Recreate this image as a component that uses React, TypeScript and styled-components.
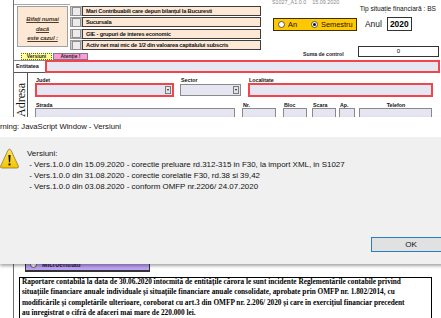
import React from "react";
import styled, { createGlobalStyle } from "styled-components";

const GlobalStyle = createGlobalStyle`
  html, body {
    margin: 0;
    padding: 0;
    background: #fff;
  }
  body {
    font-family: "Liberation Sans", Arial, sans-serif;
  }
`;

const Page = styled.div`
  position: relative;
  width: 441px;
  height: 318px;
  overflow: hidden;
  background: #fff;
`;

const Sheet = styled.div`
  height: 100%;
  padding-left: 13px;
  box-sizing: border-box;
`;

const Frame = styled.div`
  height: 100%;
  border-left: 1px solid #6f6f6f;
  display: flex;
  flex-direction: column;
`;

/* ---------- header ---------- */

const Header = styled.div`
  display: flex;
  height: 60px;
  flex-shrink: 0;
`;

const LeftColumn = styled.div`
  width: 248px;
  display: flex;
  flex-direction: column;
`;

const TopRow = styled.div`
  display: flex;
  height: 53px;
`;

const BifatiWrap = styled.div`
  width: 56px;
  margin-top: 4px;
  padding: 1px 0 0 3px;
  border-top: 1px solid #a6a6a6;
  box-sizing: border-box;
`;

const BifatiBox = styled.div`
  width: 51px;
  height: 41px;
  box-sizing: border-box;
  background: #fce8d5;
  border: 1px solid #a0a0a0;
  padding-top: 8px;
  text-align: center;
  font-size: 6px;
  line-height: 9.5px;
  font-weight: 700;
  font-style: italic;
  text-decoration: underline;
  letter-spacing: -0.15px;
  color: #4a3a2c;
`;

const CheckList = styled.div`
  display: grid;
  grid-auto-rows: 10px;
  row-gap: 1.4px;
  margin-top: 6px;
  width: 191px;
`;

const CheckRow = styled.div`
  display: flex;
`;

const CheckCell = styled.div`
  width: 12px;
  background: #c9c9c9;
  border: 1px solid #9a9a9a;
  border-right: none;
  box-sizing: border-box;
  display: flex;
  align-items: center;
  justify-content: center;
`;

const CheckSquare = styled.div`
  width: 7px;
  height: 7px;
  background: #ececec;
  border: 1px solid #8f8f8f;
`;

const CheckLabel = styled.div`
  flex: 1;
  background: #fce8d5;
  border: 1px solid #3d3d3d;
  padding-left: 3px;
  font-size: 5.7px;
  letter-spacing: -0.2px;
  font-weight: 700;
  line-height: 8px;
  color: #111;
  white-space: nowrap;
  overflow: hidden;
`;

const Tabs = styled.div`
  display: flex;
  gap: 1px;
  margin-left: 7px;
  height: 6.5px;
`;

const Tab = styled.div<{ $tone: "yellow" | "pink" }>`
  width: ${(p) => (p.$tone === "yellow" ? "31px" : "35px")};
  box-sizing: border-box;
  background: ${(p) => (p.$tone === "yellow" ? "#ffff99" : "#ff9ad9")};
  border: 1px ${(p) => (p.$tone === "yellow" ? "dotted #6b6b00" : "solid #7d7d7d")};
  font-size: 5px;
  font-weight: 700;
  line-height: 4.5px;
  text-align: center;
  color: #222;
`;

const RightColumn = styled.div`
  flex: 1;
  display: flex;
  flex-direction: column;
`;

const StampRow = styled.div`
  display: flex;
  align-items: flex-start;
  height: 17px;
`;

const Stamp = styled.div`
  margin-left: 10px;
  margin-top: -1px;
  font-size: 5.4px;
  color: #8a8a8a;
  white-space: pre;
`;

const TipLabel = styled.div`
  margin-left: auto;
  margin-right: 5px;
  margin-top: 5px;
  font-size: 6.6px;
  color: #111;
  white-space: nowrap;
`;

const PeriodRow = styled.div`
  display: flex;
  align-items: center;
  height: 14px;
`;

const PeriodBox = styled.div`
  margin-left: 11px;
  width: 84px;
  height: 13px;
  box-sizing: border-box;
  background: #ffc800;
  border: 1px solid #3a3000;
  display: flex;
  align-items: center;
  padding-left: 4px;
  gap: 3px;
  font-size: 7.4px;
  color: #111;
`;

const Radio = styled.span<{ $on?: boolean }>`
  width: 7px;
  height: 7px;
  border-radius: 50%;
  box-sizing: border-box;
  background: #fff;
  border: 1px solid #555;
  display: inline-flex;
  align-items: center;
  justify-content: center;
  flex-shrink: 0;
  margin-left: ${(p) => (p.$on ? "11px" : "0")};
  &::after {
    content: "";
    width: 3px;
    height: 3px;
    border-radius: 50%;
    background: ${(p) => (p.$on ? "#111" : "transparent")};
  }
`;

const AnulLabel = styled.div`
  margin-left: 8px;
  font-size: 8.4px;
  color: #111;
`;

const YearBox = styled.div`
  margin-left: 5px;
  width: 25px;
  height: 14px;
  box-sizing: border-box;
  border: 1px solid #333;
  font-size: 8.4px;
  font-weight: 700;
  line-height: 12px;
  text-align: center;
`;

const SumRow = styled.div`
  display: flex;
  align-items: center;
  margin-top: 14px;
`;

const SumLabel = styled.div`
  margin-left: 41px;
  margin-top: 6px;
  font-size: 5.2px;
  font-weight: 700;
  color: #222;
`;

const SumBox = styled.div`
  margin-left: auto;
  margin-right: 2px;
  width: 81px;
  height: 11px;
  box-sizing: border-box;
  border: 1px solid #333;
  font-size: 6px;
  line-height: 9px;
  text-align: center;
`;

/* ---------- entitatea ---------- */

const EntityRow = styled.div`
  display: flex;
  height: 13px;
  flex-shrink: 0;
`;

const EntityLabel = styled.div`
  width: 31px;
  box-sizing: border-box;
  border-top: 1px solid #8a8a8a;
  border-bottom: 1px solid #555;
  padding-left: 2px;
  font-size: 5.4px;
  font-weight: 700;
  line-height: 11px;
  color: #111;
`;

const InputBox = styled.div<{ $red?: boolean }>`
  box-sizing: border-box;
  background: #e6e6f3;
  border: ${(p) => (p.$red ? "2px solid #f0454a" : "1px solid #8a8a8a")};
  position: relative;
`;

const EntityField = styled(InputBox)`
  flex: 1;
  margin-right: 1px;
`;

/* ---------- adresa ---------- */

const AddressSection = styled.div`
  display: flex;
  height: 60px;
  flex-shrink: 0;
`;

const AdresaCol = styled.div`
  width: 13px;
  border-right: 1px solid #555;
  display: flex;
  align-items: flex-start;
  justify-content: center;
  padding-top: 10px;
`;

const AdresaText = styled.div`
  writing-mode: vertical-rl;
  transform: rotate(180deg);
  font-family: "Liberation Serif", "Times New Roman", serif;
  font-size: 12px;
  line-height: 12px;
  color: #111;
`;

const Fields = styled.div`
  padding-left: 7px;
  display: flex;
  flex-direction: column;
`;

const FieldRow = styled.div<{ $top: number }>`
  display: flex;
  align-items: flex-start;
  margin-top: ${(p) => p.$top}px;
`;

const FieldGroup = styled.div<{ $w: number; $ml?: number }>`
  width: ${(p) => p.$w}px;
  margin-left: ${(p) => p.$ml ?? 0}px;
  display: flex;
  flex-direction: column;
`;

const FieldLabel = styled.div<{ $center?: boolean }>`
  height: 6px;
  font-size: 5.3px;
  font-weight: 700;
  line-height: 6px;
  color: #111;
  padding-left: 1px;
  text-align: ${(p) => (p.$center ? "center" : "left")};
`;

const FieldBox = styled(InputBox)<{ $h: number }>`
  height: ${(p) => p.$h}px;
`;

const DropArrow = styled.div`
  position: absolute;
  right: 1px;
  top: 1px;
  bottom: 1px;
  width: 6px;
  background: #e4e4e4;
  border: 1px solid #7a7a7a;
  box-sizing: border-box;
  display: flex;
  align-items: center;
  justify-content: center;
  &::after {
    content: "";
    border-left: 1.5px solid transparent;
    border-right: 1.5px solid transparent;
    border-top: 2px solid #222;
  }
`;

/* ---------- bottom ---------- */

const BottomSection = styled.div`
  margin-top: auto;
  margin-bottom: -9px;
  display: flex;
  flex-direction: column;
`;

const MicroBox = styled.div`
  margin-left: 11px;
  width: 125px;
  height: 14px;
  box-sizing: border-box;
  background: #bea3f5;
  border: 1px solid #333;
  border-bottom-width: 2px;
  display: flex;
  align-items: center;
  gap: 5px;
  padding-left: 4px;
  font-size: 6.5px;
  font-weight: 700;
  color: #2a2248;
`;

const NoteBox = styled.div`
  margin-top: 5px;
  margin-left: 5px;
  width: 413px;
  height: 50px;
  box-sizing: border-box;
  border: 1px solid #000;
  padding: 0 2px;
  font-family: "Liberation Serif", "Times New Roman", serif;
  font-size: 7.3px;
  font-weight: 700;
  line-height: 10.6px;
  color: #000;
  white-space: nowrap;
  overflow: hidden;
`;

const NoteText = styled.div`
  margin-top: -1.5px;
`;

/* ---------- dialog ---------- */

const Dialog = styled.div`
  position: absolute;
  left: 0;
  top: 117px;
  width: 470px;
  height: 147px;
  display: flex;
  flex-direction: column;
  box-shadow: 0 2px 3px rgba(0, 0, 0, 0.35);
  font-family: "Liberation Sans", "Segoe UI", Arial, sans-serif;
`;

const TitleBar = styled.div`
  height: 20px;
  background: #fff;
  font-size: 7.7px;
  line-height: 20px;
  color: #111;
  white-space: nowrap;
`;

const DialogBody = styled.div`
  flex: 1;
  background: #f0f0f0;
  display: flex;
  flex-direction: column;
`;

const MessageRow = styled.div`
  display: flex;
  padding-top: 11px;
`;

const MessageText = styled.div`
  margin-left: 8px;
  font-size: 7.95px;
  line-height: 11px;
  color: #111;
  white-space: pre;
`;

const ButtonBar = styled.div`
  margin-top: auto;
  padding: 0 19px 12px 0;
  display: flex;
  justify-content: flex-end;
`;

const OkButton = styled.button`
  width: 80px;
  height: 15px;
  box-sizing: border-box;
  background: #e1e1e1;
  border: 1px solid #2a7cc7;
  font-family: inherit;
  font-size: 8.1px;
  color: #111;
  padding: 0;
`;

const WarningIcon = () => (
  <svg width="19" height="21" viewBox="0 0 19 21">
    <defs>
      <linearGradient id="warnFill" x1="0" y1="0" x2="0" y2="1">
        <stop offset="0" stopColor="#ffe65c" />
        <stop offset="1" stopColor="#f5c400" />
      </linearGradient>
    </defs>
    <path
      d="M8 2.2 Q9.5 0 11 2.2 L18.3 18 Q19 20 17 20 L2 20 Q0 20 0.7 18 Z"
      fill="url(#warnFill)"
      stroke="#8a7a3a"
      strokeWidth="0.8"
    />
    <path d="M8.4 7 L10.6 7 L10.1 14.2 L8.9 14.2 Z" fill="#111" />
    <rect x="8.5" y="15.4" width="2" height="2" fill="#111" />
  </svg>
);

const checks = [
  "Mari Contribuabili care depun bilanțul la Bucuresti",
  "Sucursala",
  "GIE - grupuri de interes economic",
  "Activ net mai mic de 1/2 din valoarea capitalului subscris",
];

const messageLines = [
  "Versiuni:",
  " - Vers.1.0.0 din 15.09.2020 - corectie preluare rd.312-315 in F30, la import XML, in S1027",
  " - Vers.1.0.0 din 31.08.2020 - corectie corelatie F30, rd.38 si 39,42",
  " - Vers.1.0.0 din 03.08.2020 - conform OMFP nr.2206/ 24.07.2020",
];

const noteLines = [
  "Raportare contabilă la data de 30.06.2020 întocmită de entitățile cărora le sunt incidente Reglementările contabile privind",
  "situațiile financiare anuale individuale și situațiile financiare anuale consolidate, aprobate prin OMFP nr. 1.802/2014, cu",
  "modificările și completările ulterioare, coroborat cu art.3 din OMFP nr. 2.206/ 2020 și care în exercițiul financiar precedent",
  "au înregistrat o cifră de afaceri mai mare de 220.000 lei.",
];

const App = () => {
  return (
    <Page>
      <GlobalStyle />
      <Sheet>
        <Frame>
          <Header>
            <LeftColumn>
              <TopRow>
                <BifatiWrap>
                  <BifatiBox>
                    Bifați numai
                    <br />
                    dacă
                    <br />
                    este cazul :
                  </BifatiBox>
                </BifatiWrap>
                <CheckList>
                  {checks.map((c) => (
                    <CheckRow key={c}>
                      <CheckCell>
                        <CheckSquare />
                      </CheckCell>
                      <CheckLabel>{c}</CheckLabel>
                    </CheckRow>
                  ))}
                </CheckList>
              </TopRow>
              <Tabs>
                <Tab $tone="yellow">Versiuni</Tab>
                <Tab $tone="pink">Atenție !</Tab>
              </Tabs>
            </LeftColumn>
            <RightColumn>
              <StampRow>
                <Stamp>{"S1027_A1.0.0    15.09.2020"}</Stamp>
                <TipLabel>Tip situație financiară :  BS</TipLabel>
              </StampRow>
              <PeriodRow>
                <PeriodBox>
                  <Radio />
                  An
                  <Radio $on />
                  Semestru
                </PeriodBox>
                <AnulLabel>Anul</AnulLabel>
                <YearBox>2020</YearBox>
              </PeriodRow>
              <SumRow>
                <SumLabel>Suma de control</SumLabel>
                <SumBox>0</SumBox>
              </SumRow>
            </RightColumn>
          </Header>

          <EntityRow>
            <EntityLabel>Entitatea</EntityLabel>
            <EntityField $red />
          </EntityRow>

          <AddressSection>
            <AdresaCol>
              <AdresaText>Adresa</AdresaText>
            </AdresaCol>
            <Fields>
              <FieldRow $top={4}>
                <FieldGroup $w={139}>
                  <FieldLabel>Judet</FieldLabel>
                  <FieldBox $red $h={14}>
                    <DropArrow />
                  </FieldBox>
                </FieldGroup>
                <FieldGroup $w={61} $ml={6}>
                  <FieldLabel>Sector</FieldLabel>
                  <FieldBox $h={12} style={{ marginTop: 1 }}>
                    <DropArrow />
                  </FieldBox>
                </FieldGroup>
                <FieldGroup $w={185} $ml={7}>
                  <FieldLabel>Localitate</FieldLabel>
                  <FieldBox $red $h={14} />
                </FieldGroup>
              </FieldRow>
              <FieldRow $top={5}>
                <FieldGroup $w={200}>
                  <FieldLabel>Strada</FieldLabel>
                  <FieldBox $h={14} />
                </FieldGroup>
                <FieldGroup $w={34} $ml={7}>
                  <FieldLabel>Nr.</FieldLabel>
                  <FieldBox $h={14} />
                </FieldGroup>
                <FieldGroup $w={24} $ml={7}>
                  <FieldLabel>Bloc</FieldLabel>
                  <FieldBox $h={14} />
                </FieldGroup>
                <FieldGroup $w={24} $ml={5}>
                  <FieldLabel>Scara</FieldLabel>
                  <FieldBox $h={14} />
                </FieldGroup>
                <FieldGroup $w={16} $ml={3}>
                  <FieldLabel>Ap.</FieldLabel>
                  <FieldBox $h={14} />
                </FieldGroup>
                <FieldGroup $w={73} $ml={4}>
                  <FieldLabel $center>Telefon</FieldLabel>
                  <FieldBox $h={14} />
                </FieldGroup>
              </FieldRow>
            </Fields>
          </AddressSection>

          <BottomSection>
            <MicroBox>
              <Radio />
              Microentitati
            </MicroBox>
            <NoteBox>
              <NoteText>
                {noteLines.map((l) => (
                  <div key={l}>{l}</div>
                ))}
              </NoteText>
            </NoteBox>
          </BottomSection>
        </Frame>
      </Sheet>

      <Dialog>
        <TitleBar>rning: JavaScript Window - Versiuni</TitleBar>
        <DialogBody>
          <MessageRow>
            <WarningIcon />
            <MessageText>{messageLines.join("\n")}</MessageText>
          </MessageRow>
          <ButtonBar>
            <OkButton>OK</OkButton>
          </ButtonBar>
        </DialogBody>
      </Dialog>
    </Page>
  );
};

export default App;
